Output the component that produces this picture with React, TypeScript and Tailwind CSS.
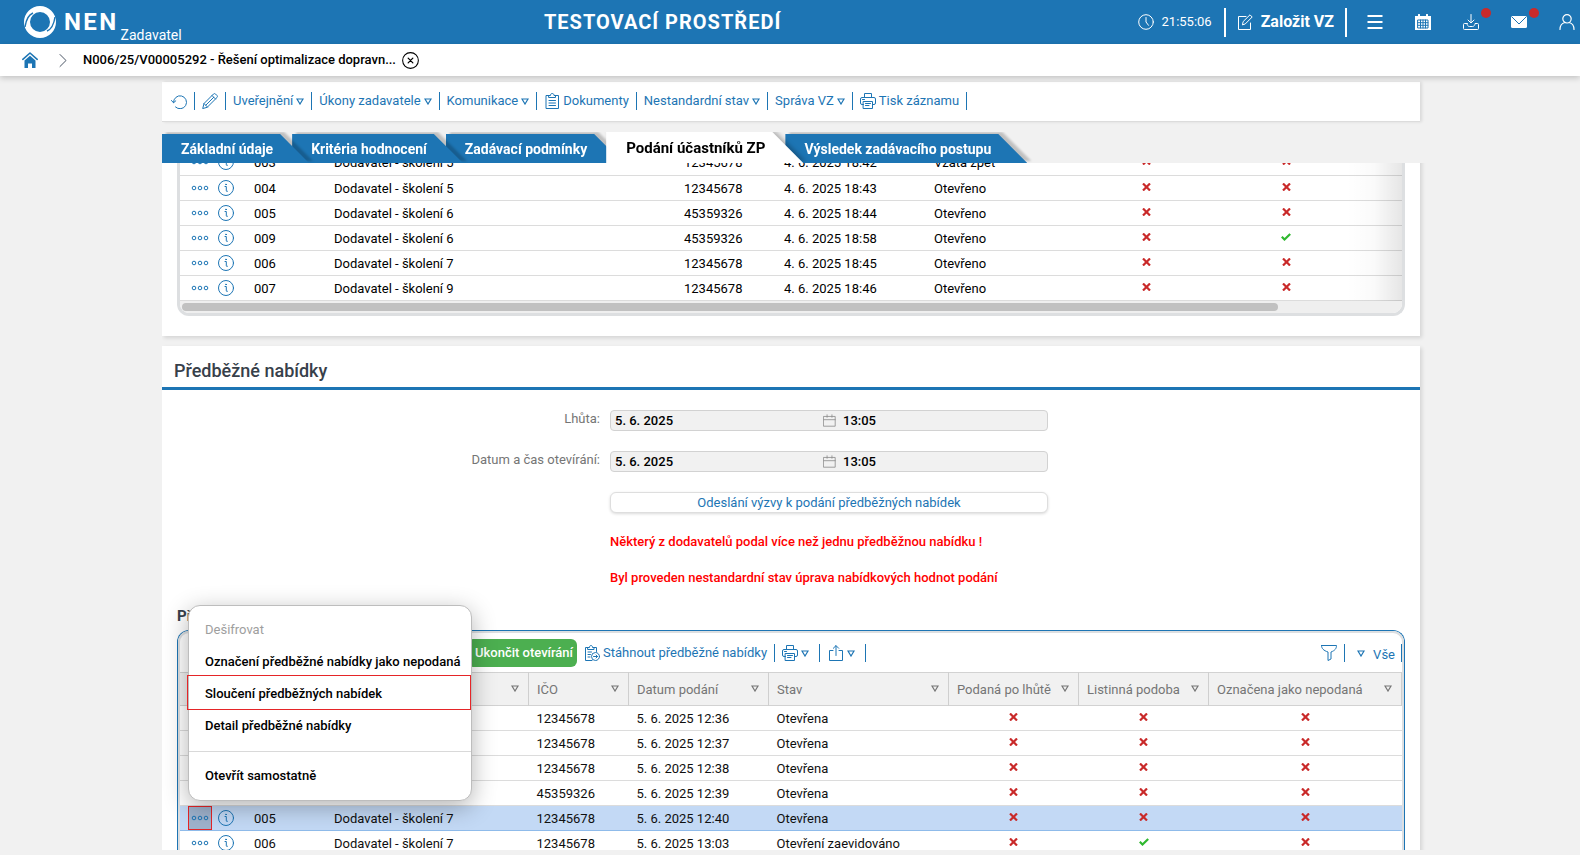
import type { ReactNode } from "react";
import clsx from "clsx";
import { twMerge } from "tailwind-merge";

interface Offer {
  id: string;
  supplier: string;
  ico: string;
  date: string;
  state: string;
  flags: boolean[];
  selected?: boolean;
}

const submissions: Offer[] = [
  { id: "003", supplier: "Dodavatel - školení 5", ico: "12345678", date: "4. 6. 2025 18:42", state: "Vzata zpět", flags: [false, false] },
  { id: "004", supplier: "Dodavatel - školení 5", ico: "12345678", date: "4. 6. 2025 18:43", state: "Otevřeno", flags: [false, false] },
  { id: "005", supplier: "Dodavatel - školení 6", ico: "45359326", date: "4. 6. 2025 18:44", state: "Otevřeno", flags: [false, false] },
  { id: "009", supplier: "Dodavatel - školení 6", ico: "45359326", date: "4. 6. 2025 18:58", state: "Otevřeno", flags: [false, true] },
  { id: "006", supplier: "Dodavatel - školení 7", ico: "12345678", date: "4. 6. 2025 18:45", state: "Otevřeno", flags: [false, false] },
  { id: "007", supplier: "Dodavatel - školení 9", ico: "12345678", date: "4. 6. 2025 18:46", state: "Otevřeno", flags: [false, false] },
];

const preliminary: Offer[] = [
  { id: "001", supplier: "Dodavatel - školení 5", ico: "12345678", date: "5. 6. 2025 12:36", state: "Otevřena", flags: [false, false, false] },
  { id: "002", supplier: "Dodavatel - školení 5", ico: "12345678", date: "5. 6. 2025 12:37", state: "Otevřena", flags: [false, false, false] },
  { id: "003", supplier: "Dodavatel - školení 5", ico: "12345678", date: "5. 6. 2025 12:38", state: "Otevřena", flags: [false, false, false] },
  { id: "004", supplier: "Dodavatel - školení 6", ico: "45359326", date: "5. 6. 2025 12:39", state: "Otevřena", flags: [false, false, false] },
  { id: "005", supplier: "Dodavatel - školení 7", ico: "12345678", date: "5. 6. 2025 12:40", state: "Otevřena", flags: [false, false, false], selected: true },
  { id: "006", supplier: "Dodavatel - školení 7", ico: "12345678", date: "5. 6. 2025 13:03", state: "Otevření zaevidováno", flags: [false, true, false] },
];

/* Icons */

interface IconProps {
  children: ReactNode;
  className?: string;
}

function Icon({ children, className }: IconProps) {
  return (
    <svg
      viewBox="0 0 16 16"
      className={twMerge("size-4 shrink-0", className)}
      fill="none"
      stroke="currentColor"
      strokeWidth="1"
      strokeLinecap="round"
      strokeLinejoin="round"
      aria-hidden="true"
    >
      {children}
    </svg>
  );
}

function Triangle() {
  return (
    <svg viewBox="0 0 8 7" className="h-[7px] w-2 shrink-0" fill="none" stroke="currentColor" strokeWidth="1.2" aria-hidden="true">
      <path d="M1 1h6L4 6z" />
    </svg>
  );
}

function Logo() {
  return (
    <svg viewBox="0 0 32 32" className="size-8 shrink-0" aria-hidden="true">
      <path
        d="M16 0a16 16 0 1 1 0 32 16 16 0 1 1 0-32zM16 6a10 10 0 1 0 0 20 10 10 0 1 0 0-20z"
        fill="#fff"
        fillRule="evenodd"
      />
      <path d="M1 21C2 14 4 9 9 7" fill="none" stroke="#1d75b4" strokeWidth="1.4" />
      <path d="M31 11c-1 7-3 12-8 14" fill="none" stroke="#1d75b4" strokeWidth="1.4" />
    </svg>
  );
}

function PrinterIcon() {
  return (
    <Icon>
      <path d="M4.500 4.500v-4h7v4M3.500 11.500H2A1.500 1.500 0 0 1 .5 10V6A1.500 1.500 0 0 1 2 4.500h12A1.500 1.500 0 0 1 15.500 6v4a1.500 1.500 0 0 1-1.500 1.500h-1.500" />
      <path d="M3.500 8.500h9v7h-9zM5.500 10.500h5M5.500 12.500h3.500M2.500 6.500h2" />
    </Icon>
  );
}

function DotsIcon() {
  return (
    <svg viewBox="0 0 18 6" className="h-1.5 w-[18px]" fill="none" stroke="currentColor" strokeWidth="1" aria-hidden="true">
      <circle cx="3" cy="3" r="1.800" />
      <circle cx="9" cy="3" r="1.800" />
      <circle cx="15" cy="3" r="1.800" />
    </svg>
  );
}

function InfoIcon() {
  return (
    <Icon>
      <circle cx="8" cy="8" r="7.500" />
      <path d="M7 6.500h1.300v4.300c0 .6.400.800 1.200.500" />
      <circle cx="8" cy="4.400" r=".4" fill="currentColor" />
    </Icon>
  );
}

function Flag({ on }: { on: boolean }) {
  return on ? (
    <svg viewBox="0 0 10 8" className="mx-auto mb-0.5 h-2 w-2.5" fill="none" stroke="#2fb82f" strokeWidth="2.200" role="img" aria-label="Ano">
      <path d="M.8 3.800l2.700 2.700L9.200 1" />
    </svg>
  ) : (
    <svg viewBox="0 0 9 8" className="mx-auto mb-0.5 h-2 w-[9px]" fill="none" stroke="#c92a2a" strokeWidth="2.200" role="img" aria-label="Ne">
      <path d="M1 .5l7 7M8 .5l-7 7" />
    </svg>
  );
}

/* Header */

function HeaderBar() {
  return (
    <header className="flex h-11 shrink-0 items-center bg-[#1d75b4] pl-6 text-white">
      <Logo />
      <strong className="ml-2 text-2xl leading-8 font-bold tracking-widest">NEN</strong>
      <span className="ml-0.5 self-end pb-px text-sm leading-4">Zadavatel</span>
      <h1 className="flex-1 pl-1.5 text-center text-xl font-bold tracking-wider">TESTOVACÍ PROSTŘEDÍ</h1>
      <div className="flex h-full items-center">
        <Icon>
          <circle cx="8" cy="8" r="7.300" />
          <path d="M8 3.500V8l2.500 3.300" />
        </Icon>
        <span className="ml-2 text-[13px]">21:55:06</span>
        <div className="ml-3 flex h-[29px] items-center border-x-2 border-white px-[11px]">
          <button type="button" className="flex items-center gap-2 text-base font-bold">
            <Icon>
              <path d="M9 2.500H1.500v13h12V9" />
              <path d="M5.500 10.500l.7-3L13 .8l2.200 2.200-6.700 6.700z" />
            </Icon>
            Založit VZ
          </button>
        </div>
        <div className="ml-5 flex items-center gap-8 pr-[5px]">
          <button type="button" aria-label="Menu">
            <Icon>
              <path d="M.5 2h15M.5 8h15M.5 14h15" strokeWidth="2" strokeLinecap="butt" />
            </Icon>
          </button>
          <button type="button" aria-label="Kalendář">
            <Icon>
              <path d="M0 2h16v14H0z" fill="currentColor" stroke="none" />
              <path d="M4 .8v3M12 .8v3" strokeWidth="2" />
              <path d="M3 6h10v8H3zM3 8.700h10M3 11.300h10M5.500 6v8M8 6v8M10.500 6v8" stroke="#1d75b4" />
            </Icon>
          </button>
          <button type="button" aria-label="Stažené soubory" className="relative">
            <Icon>
              <path d="M8 .5v8M5 6l3 3 3-3" />
              <path d="M4 9.500H1.500a1 1 0 0 0-1 1v4a1 1 0 0 0 1 1h13a1 1 0 0 0 1-1v-4a1 1 0 0 0-1-1H12c0 1.500-1 3-2.500 3h-3C5 12.500 4 11 4 9.500z" />
            </Icon>
            <span className="absolute -top-1.5 left-[18px] size-2.5 rounded-full bg-[#c92a2a]" />
          </button>
          <button type="button" aria-label="Zprávy" className="relative">
            <Icon>
              <rect x="0" y="2" width="16" height="12" rx="1.500" fill="currentColor" stroke="none" />
              <path d="M1 3l7 7 7-7" stroke="#1d75b4" />
            </Icon>
            <span className="absolute -top-1.5 left-[18px] size-2.5 rounded-full bg-[#c92a2a]" />
          </button>
          <button type="button" aria-label="Uživatel">
            <Icon>
              <circle cx="8" cy="4.800" r="4.200" strokeWidth="1.200" />
              <path d="M1 15.500c0-4 2.500-6.500 5-7M15 15.500c0-4-2.500-6.500-5-7" strokeWidth="1.200" />
            </Icon>
          </button>
        </div>
      </div>
    </header>
  );
}

function Breadcrumb() {
  return (
    <nav className="relative z-20 flex h-8 shrink-0 items-center bg-white pl-[22px] shadow-[0_2px_6px_rgba(0,0,0,0.2)]">
      <a href="#" aria-label="Domů" className="text-[#1d75b4]">
        <Icon>
          <path d="M.8 7.300L8 1l7.200 6.300" strokeWidth="1.600" />
          <path d="M2.500 8.500L8 3.700l5.500 4.800V16H10v-4.500H6V16H2.500z" fill="currentColor" stroke="none" />
        </Icon>
      </a>
      <Icon className="ml-4 text-gray-600">
        <path d="M6 2.500L12 8.500 6 14.500" />
      </Icon>
      <span className="ml-[13px] text-[13px] font-medium text-black">N006/25/V00005292 - Řešení optimalizace dopravn...</span>
      <button type="button" aria-label="Zavřít" className="ml-1.5 text-black">
        <Icon className="size-[17px]">
          <circle cx="8" cy="8" r="7.400" />
          <path d="M5.800 5.800l4.400 4.400M10.200 5.800l-4.400 4.400" strokeWidth="1.200" />
        </Icon>
      </button>
    </nav>
  );
}

/* Record toolbar */

interface ToolbarItemProps {
  icon?: ReactNode;
  label?: string;
  name?: string;
  menu?: boolean;
}

function ToolbarItem({ icon, label, name, menu }: ToolbarItemProps) {
  return (
    <button
      type="button"
      aria-label={name}
      className="flex h-[18px] items-center gap-[3px] border-r border-[#1d75b4] px-[7px] text-[13px] whitespace-nowrap text-[#1d75b4]"
    >
      {icon}
      {label}
      {menu && <Triangle />}
    </button>
  );
}

function RecordToolbar() {
  return (
    <div className="mt-1.5 flex h-10 shrink-0 items-start border-b border-[#dcdcdc] bg-white pt-2.5 pl-0.5 shadow-[2px_0_3px_rgba(0,0,0,0.1)]">
      <ToolbarItem
        name="Obnovit"
        icon={
          <Icon>
            <path d="M2.500 9.500a6.500 6.500 0 1 1 2 4.500" />
            <path d="M.5 7.500l2 2.300 2.300-2" />
          </Icon>
        }
      />
      <ToolbarItem
        name="Upravit"
        icon={
          <Icon>
            <path d="M.8 15.200l1.200-4.700L11.500 1a1.500 1.500 0 0 1 2 0l1.500 1.500a1.500 1.500 0 0 1 0 2L5.500 14zM10 2.500L13.500 6M2 10.500L5.500 14M3.800 12.200l8-8" />
          </Icon>
        }
      />
      <ToolbarItem label="Uveřejnění" menu />
      <ToolbarItem label="Úkony zadavatele" menu />
      <ToolbarItem label="Komunikace" menu />
      <ToolbarItem
        label="Dokumenty"
        icon={
          <Icon>
            <path d="M5 2.500H2v13h12.500v-13h-3M5 2.500h1.500C6.500 1.200 7 .5 8.200.5s1.800.7 1.800 2h1.500v2H5zM5 7.500h6.500M5 10h6.500M5 12.500h6.500" />
          </Icon>
        }
      />
      <ToolbarItem label="Nestandardní stav" menu />
      <ToolbarItem label="Správa VZ" menu />
      <ToolbarItem label="Tisk záznamu" icon={<PrinterIcon />} />
    </div>
  );
}

/* Tabs */

interface TabProps {
  label: string;
  active?: boolean;
  layer: string;
}

function Tab({ label, active, layer }: TabProps) {
  return (
    <div
      className={clsx(
        layer,
        active
          ? "relative -mr-[18px] drop-shadow-[3px_-1px_2px_rgba(0,0,0,0.25)]"
          : "relative -mr-[17px] drop-shadow-[4px_-2px_1px_rgba(0,0,0,0.2)]",
      )}
    >
      <button
        type="button"
        role="tab"
        aria-selected={active ?? false}
        className={
          active
            ? "block h-[31px] bg-white pt-px pr-[38px] pl-5 text-[15px] leading-[30px] font-bold whitespace-nowrap text-black [clip-path:polygon(0_0,calc(100%-31px)_0,100%_100%,0_100%)]"
            : "block h-[29px] bg-[#1d75b4] pt-0.5 pr-9 pl-[19px] text-sm leading-[27px] font-bold whitespace-nowrap text-white [clip-path:polygon(0_0,calc(100%-29px)_0,100%_100%,0_100%)]"
        }
      >
        {label}
      </button>
    </div>
  );
}

function Tabs() {
  return (
    <div role="tablist" className="mt-2.5 flex h-[31px] shrink-0 items-end overflow-hidden">
      <Tab label="Základní údaje" layer="z-4" />
      <Tab label="Kritéria hodnocení" layer="z-3" />
      <Tab label="Zadávací podmínky" layer="z-2" />
      <Tab label="Podání účastníků ZP" layer="z-5" active />
      <Tab label="Výsledek zadávacího postupu" layer="z-1" />
    </div>
  );
}

/* Grids */

function ContextMenu() {
  const item = "block h-8 w-full px-4 text-left text-[13px] font-medium whitespace-nowrap text-black";
  return (
    <div role="menu" className="absolute bottom-full left-0 z-10 mb-[5px] w-[284px] rounded-xl border border-[#bdbdbd] bg-white py-2 shadow-[0_6px_24px_rgba(0,0,0,0.3)]">
      <button type="button" role="menuitem" disabled className="block h-8 w-full px-4 text-left text-[13px] text-[#9e9e9e]">
        Dešifrovat
      </button>
      <button type="button" role="menuitem" className={item}>
        Označení předběžné nabídky jako nepodaná
      </button>
      <div className="relative">
        <button type="button" role="menuitem" className={item}>
          Sloučení předběžných nabídek
        </button>
        <span className="pointer-events-none absolute -top-[3px] right-0 bottom-0 -left-0.5 border border-[#e52528]" />
      </div>
      <button type="button" role="menuitem" className={item}>
        Detail předběžné nabídky
      </button>
      <hr className="mt-[9px] mb-2 border-[#d9d9d9]" />
      <button type="button" role="menuitem" className={item}>
        Otevřít samostatně
      </button>
    </div>
  );
}

function OfferRow({ offer }: { offer: Offer }) {
  return (
    <tr className={clsx("h-[25px] border-b", offer.selected ? "border-[#8fbbea] bg-[#c3d9f5]" : "border-[#dcdcdc]")}>
      <td className="p-0">
        <div className="flex h-6 items-center gap-1.5 pl-2 text-[#1d75b4]">
          <div className="relative">
            <button
              type="button"
              aria-label="Akce"
              className={clsx("flex size-6 items-center justify-center", offer.selected && "border border-[#e52528] bg-[#9fb2cc]")}
            >
              <DotsIcon />
            </button>
            {offer.selected && <ContextMenu />}
          </div>
          <button type="button" aria-label="Detail">
            <InfoIcon />
          </button>
        </div>
      </td>
      <td className="pt-0.5 pb-0 pl-2">{offer.id}</td>
      <td className="pt-0.5 pb-0 pl-2">{offer.supplier}</td>
      <td className="pt-0.5 pb-0 pl-2">{offer.ico}</td>
      <td className="pt-0.5 pb-0 pl-2">{offer.date}</td>
      <td className="pt-0.5 pb-0 pl-2">{offer.state}</td>
      {offer.flags.map((flag, i) => (
        <td key={i} className="p-0">
          <Flag on={flag} />
        </td>
      ))}
    </tr>
  );
}

function SubmissionsPanel() {
  return (
    <section className="-mt-[13px] bg-white px-[15px] pb-5 shadow-[2px_2px_4px_rgba(0,0,0,0.12)]">
      <div className="relative overflow-hidden rounded-b-xl border-x-[3px] border-b-[3px] border-[#dddfe1]">
        <table className="w-full table-fixed border-collapse text-[13px] leading-5 text-black">
          <colgroup>
            <col className="w-[66px]" />
            <col className="w-20" />
            <col />
            <col className="w-[100px]" />
            <col className="w-[150px]" />
            <col className="w-[150px]" />
            <col className="w-[140px]" />
            <col className="w-[140px]" />
            <col className="w-[46px]" />
          </colgroup>
          <tbody>
            {submissions.map((offer) => (
              <OfferRow key={offer.id} offer={offer} />
            ))}
          </tbody>
        </table>
        <div className="pointer-events-none absolute top-0 right-0 bottom-3 w-14 bg-linear-to-r from-transparent via-black/2 to-black/10" />
        <div className="h-3 bg-[#efefef] px-0.5 py-0.5">
          <div className="h-2 w-[90%] rounded-full bg-[#c1c1c1]" />
        </div>
      </div>
    </section>
  );
}

interface DateFieldProps {
  id: string;
  label: string;
}

function DateField({ id, label }: DateFieldProps) {
  return (
    <>
      <label htmlFor={id} className="text-right leading-[18px] text-[#757575]">
        {label}
      </label>
      <div className="flex h-[21px] items-center rounded border border-[#d2d2d2] bg-[#f1f1f1] pl-1 font-medium text-black">
        <input id={id} readOnly defaultValue="5. 6. 2025" className="w-[208px] min-w-0 bg-transparent pt-0.5 outline-none" />
        <Icon className="size-[13px] text-[#8a8a8a]">
          <path d="M1 3h14v12H1zM1 7h14M5 1v3M11 1v3" />
        </Icon>
        <input aria-label={`${label} čas`} readOnly defaultValue="13:05" className="ml-[7px] w-0 min-w-0 flex-1 bg-transparent pt-0.5 outline-none" />
      </div>
      <span />
    </>
  );
}

function HeaderCell({ label }: { label?: string }) {
  return (
    <th scope="col" className="border-r border-[#cfcfcf] p-0 font-normal">
      <span className="flex items-center justify-between pr-[9px] pl-2">
        <span className="pt-0.5 whitespace-nowrap">{label}</span>
        <Triangle />
      </span>
    </th>
  );
}

function PreliminaryGrid() {
  return (
    <div className="rounded-t-xl border border-b-0 border-[#1d75b4] bg-white">
      <div className="rounded-t-[11px] border-2 border-b-0 border-[#dddfe1]">
        <div className="flex h-[39px] items-center pt-0.5 pl-[287px]">
          <button type="button" className="h-7 rounded-md bg-[#4caf50] pr-1 pl-2 text-[13px] font-medium whitespace-nowrap text-white">
            Ukončit otevírání
          </button>
          <ToolbarItem
            label="Stáhnout předběžné nabídky"
            icon={
              <Icon>
                <path d="M4 2.500H1.500v13H8M4 2.500h1.500C5.500 1.200 6 .5 7 .5s1.500.7 1.500 2H10v2H4zM10 2.500h2.500v4M4 7h3.500M4 9.500h2.500M4 12h2" />
                <circle cx="11.500" cy="11.500" r="4" />
                <path d="M9.500 11.500h4M12 10l1.500 1.500L12 13" />
              </Icon>
            }
          />
          <div className="flex [&>button]:pr-2.5">
            <ToolbarItem name="Tisk" icon={<PrinterIcon />} menu />
            <ToolbarItem
              name="Export"
              icon={
                <Icon className="ml-px">
                  <path d="M5 5.500H1.500v10h13v-10H11M8 10.500V.8M5.300 3.300L8 .6l2.700 2.700" />
                </Icon>
              }
              menu
            />
          </div>
          <div className="ml-auto flex">
            <ToolbarItem
              name="Filtr"
              icon={
                <Icon>
                  <path d="M.5.5h15c0 3-1.500 5-5.500 6.500v7l-3 1.500V7C2.500 5.500.5 3.500.5.500z" />
                </Icon>
              }
            />
            <button type="button" className="flex h-[18px] items-center gap-2 border-r border-[#1d75b4] pr-1.5 pl-3 text-[13px] text-[#1d75b4]">
              <Triangle />
              <span className="pt-[3px]">Vše</span>
            </button>
          </div>
        </div>
        <table className="w-full table-fixed border-collapse text-[13px] leading-5 text-[#0f0f0f]">
          <colgroup>
            <col className="w-[66px]" />
            <col className="w-20" />
            <col />
            <col className="w-[100px]" />
            <col className="w-[140px]" />
            <col className="w-[180px]" />
            <col className="w-[130px]" />
            <col className="w-[130px]" />
            <col className="w-[193px]" />
          </colgroup>
          <thead>
            <tr className="h-[33px] border-y border-[#d2d2d2] bg-[#f1f1f1] text-left text-[#757575]">
              <th scope="col" aria-label="Akce" className="p-0" />
              <HeaderCell label="Číslo" />
              <HeaderCell label="Název dodavatele" />
              <HeaderCell label="IČO" />
              <HeaderCell label="Datum podání" />
              <HeaderCell label="Stav" />
              <HeaderCell label="Podaná po lhůtě" />
              <HeaderCell label="Listinná podoba" />
              <HeaderCell label="Označena jako nepodaná" />
            </tr>
          </thead>
          <tbody>
            {preliminary.map((offer) => (
              <OfferRow key={offer.id} offer={offer} />
            ))}
          </tbody>
        </table>
      </div>
    </div>
  );
}

function PreliminaryPanel() {
  return (
    <section className="mt-2.5 bg-white shadow-[2px_2px_4px_rgba(0,0,0,0.12)]">
      <h2 className="h-11 border-b-[3px] border-[#1d75b4] pt-[11px] pl-3 text-lg leading-7 font-medium text-[#37404a]">Předběžné nabídky</h2>
      <div className="grid grid-cols-[438fr_438fr_362fr] gap-x-2.5 gap-y-5 pt-5 text-[13px]">
        <DateField id="deadline" label="Lhůta:" />
        <DateField id="opening" label="Datum a čas otevírání:" />
        <button
          type="button"
          className="col-start-2 h-[21px] rounded-md border border-[#dedede] bg-white leading-5 text-[#1d75b4] shadow-[0_1px_3px_rgba(0,0,0,0.15)]"
        >
          Odeslání výzvy k podání předběžných nabídek
        </button>
        <div className="col-span-2 col-start-2 flex flex-col gap-[18px] font-medium text-[#ff0000]">
          <p className="leading-[18px]">Některý z dodavatelů podal více než jednu předběžnou nabídku !</p>
          <p className="leading-[18px]">Byl proveden nestandardní stav úprava nabídkových hodnot podání</p>
        </div>
      </div>
      <div className="px-[15px] pt-[19px]">
        <h3 className="h-6 text-[15px] leading-5 font-bold text-[#37404a]">Předběžné nabídky</h3>
        <PreliminaryGrid />
      </div>
    </section>
  );
}

export default function App() {
  return (
    <div className="flex h-screen flex-col overflow-hidden bg-[#f1f1f1] font-['Roboto',sans-serif]">
      <HeaderBar />
      <Breadcrumb />
      <main className="flex min-h-0 flex-1 flex-col pb-[5px] pl-0.5">
        <div className="mx-auto flex min-h-0 w-full max-w-[1258px] flex-1 flex-col">
          <RecordToolbar />
          <Tabs />
          <div className="-mr-2 min-h-0 flex-1 overflow-hidden pr-2">
            <SubmissionsPanel />
            <PreliminaryPanel />
          </div>
        </div>
      </main>
    </div>
  );
}
